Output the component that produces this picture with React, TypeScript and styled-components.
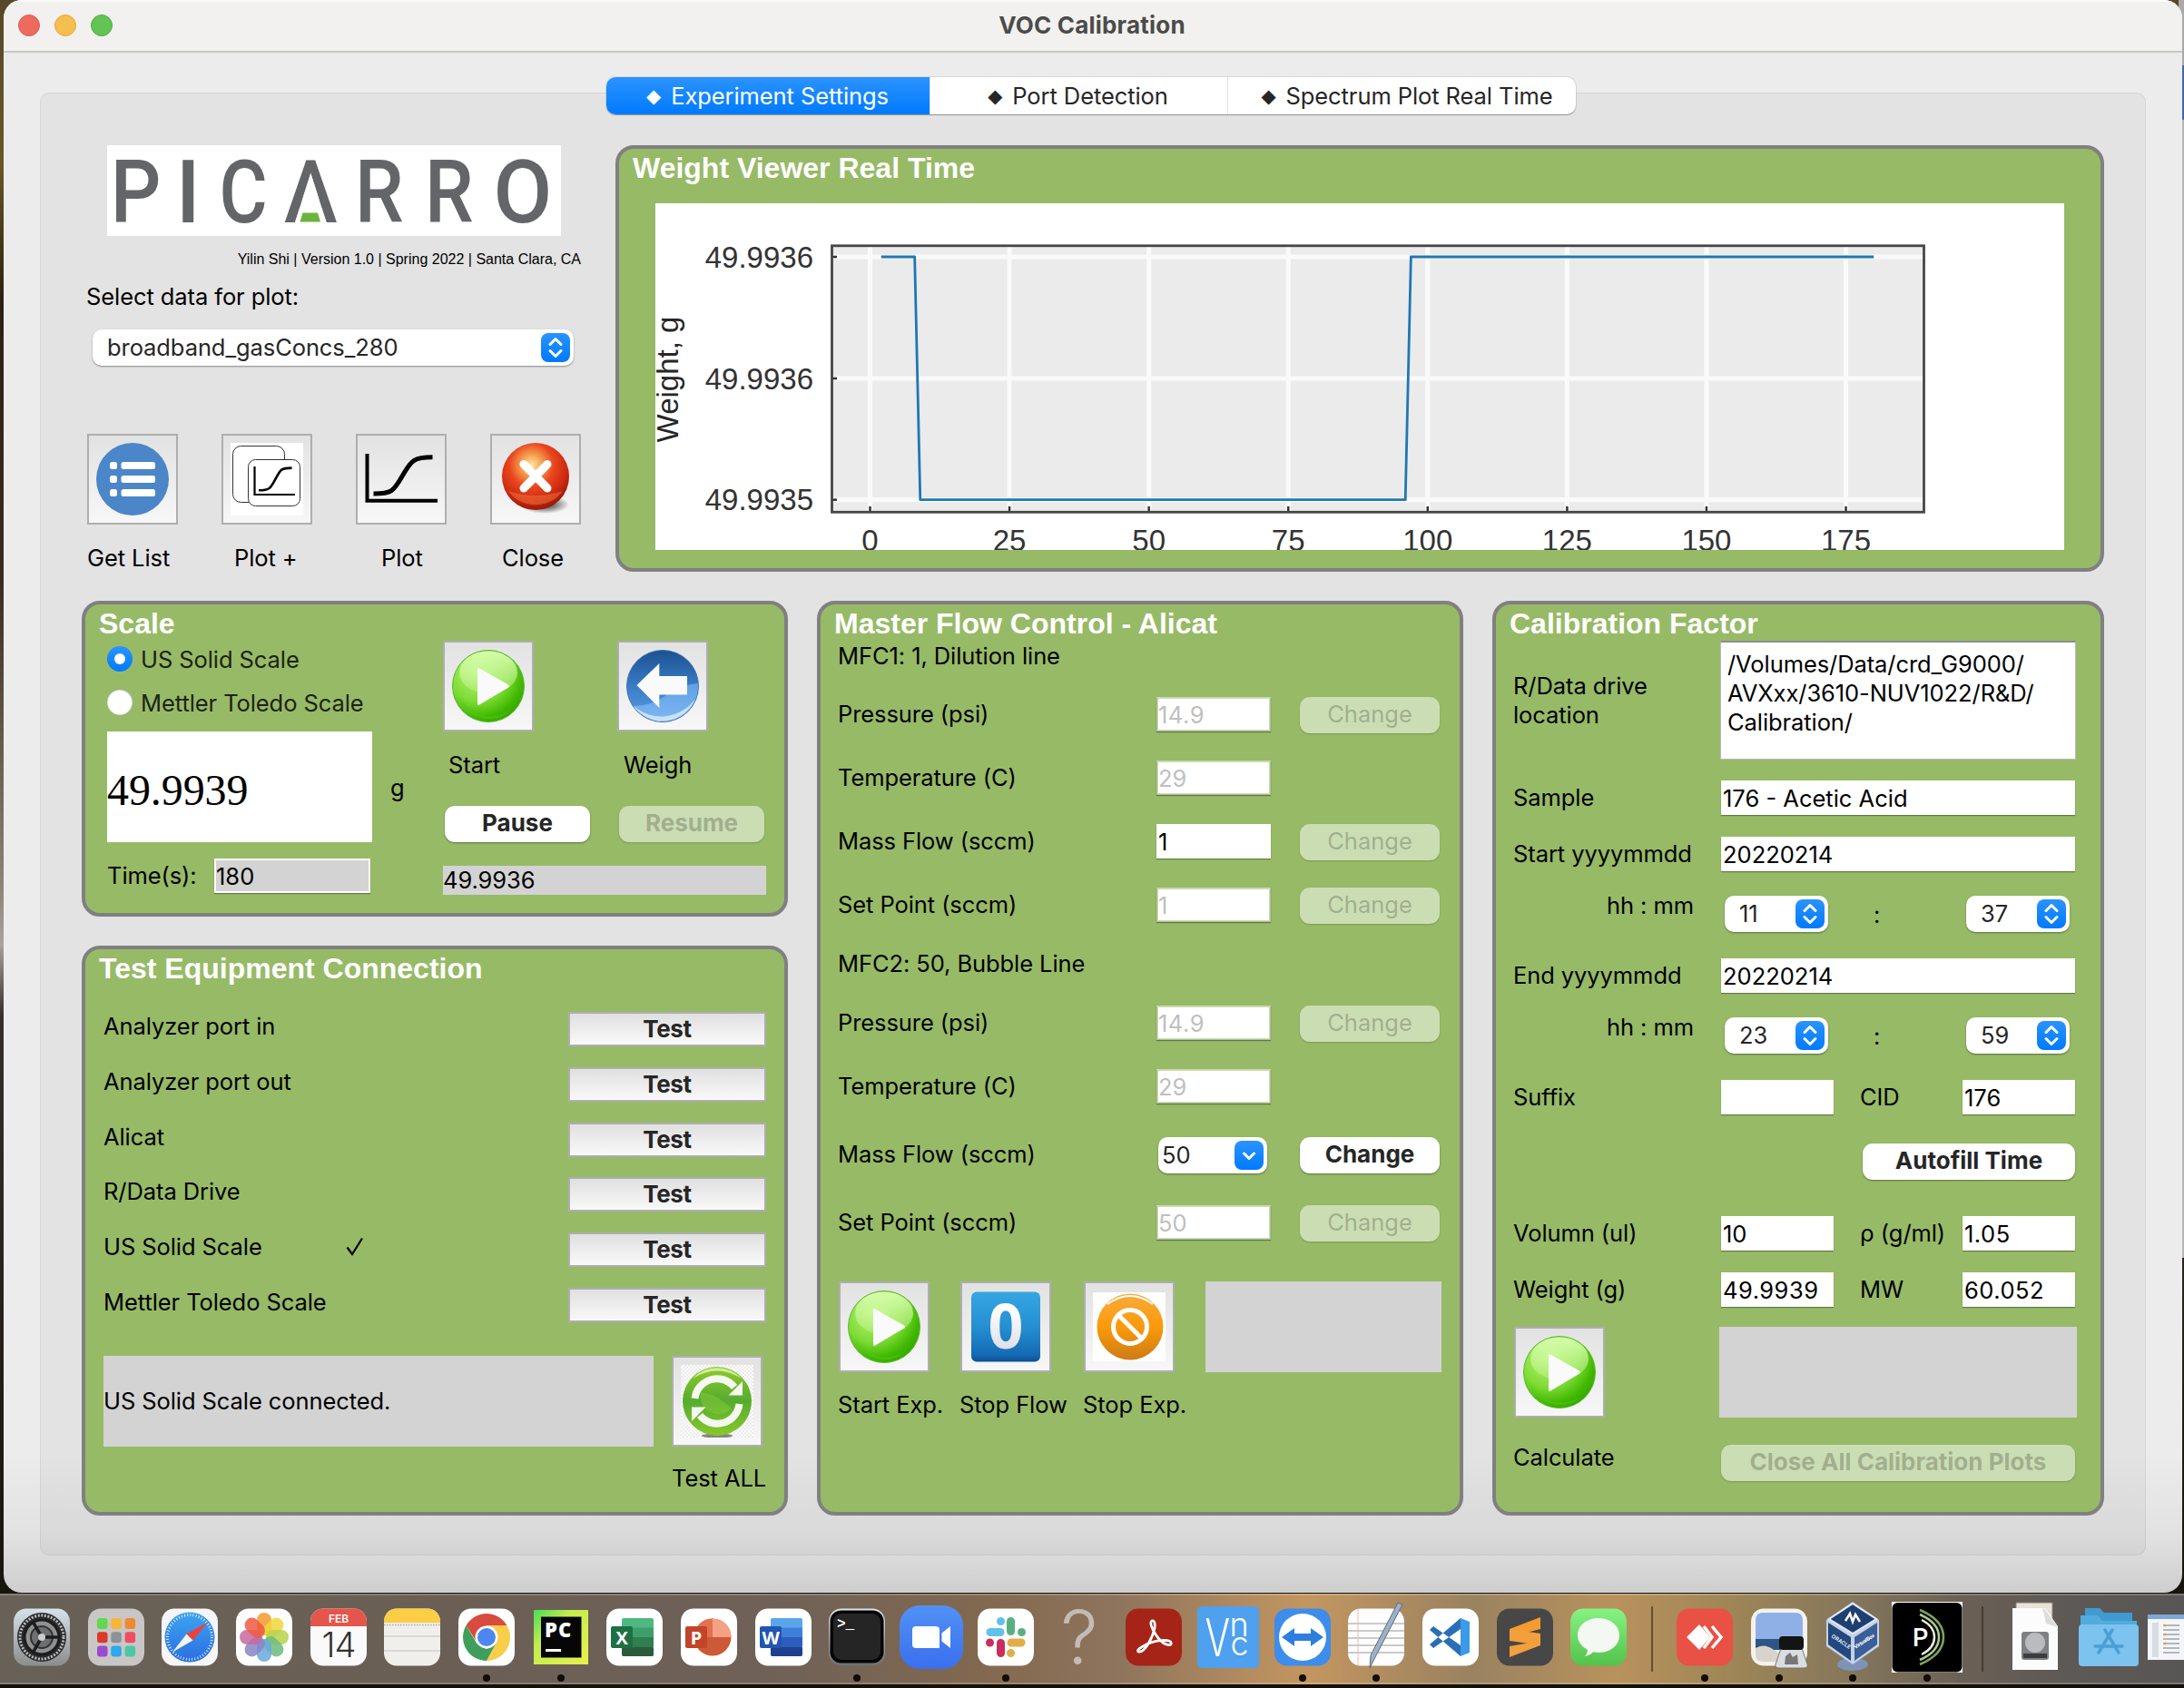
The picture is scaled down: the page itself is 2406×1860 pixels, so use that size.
import React from 'react';
import styled, { createGlobalStyle, css } from 'styled-components';

const GlobalStyle = createGlobalStyle`
  html, body { margin: 0; padding: 0; }
  *, *::before, *::after { box-sizing: border-box; }
  body {
    width: 2406px;
    height: 1860px;
    overflow: hidden;
    font-family: Inter, "Noto Sans", sans-serif;
    font-size: 25.5px;
    letter-spacing: -0.08px;
    color: #000;
  }
`;

const GREEN = '#97ba67';

/* ---------- desktop and window ---------- */

const Desktop = styled.div`
  width: 2406px;
  height: 1860px;
  overflow: hidden;
  display: flex;
  flex-direction: column;
  background:
    linear-gradient(90deg, transparent 2400px, #a9a9a9 2400px) 0 0 / 100% 72px no-repeat,
    linear-gradient(90deg, transparent 2400px, #3f6aa8 2400px) 0 72px / 100% 60px no-repeat,
    linear-gradient(90deg, transparent 2400px, #b4b4b4 2400px) 0 132px / 100% 1254px no-repeat,
    linear-gradient(180deg, #57482a 0, #6b5626 180px, #2c2110 330px, #3a2c1c 640px, #8c8578 980px, #a8a49b 1040px, #33302a 1120px, #1a170f 1700px, #14110b 100%);
`;

const Window = styled.main`
  width: 2400px;
  height: 1755px;
  flex: none;
  margin-left: 4px;
  border-radius: 20px;
  overflow: hidden;
  display: flex;
  flex-direction: column;
  background: linear-gradient(180deg, #ececec 0, #ececec 1600px, #e2e2e2 1690px, #cecece 1755px);
`;

const TitleBar = styled.header`
  height: 58px;
  flex: none;
  display: grid;
  grid-template-columns: 200px 1fr 200px;
  align-items: center;
  padding-bottom: 2px;
  background: #f2f1ef;
  border-top: 2px solid #fbfbfa;
  border-bottom: 2px solid #c8c7c6;
`;

const TrafficLights = styled.div`
  display: flex;
  gap: 16px;
  padding-left: 16px;
`;

const Light = styled.span<{ $color: string; $edge: string }>`
  width: 24px;
  height: 24px;
  border-radius: 50%;
  background: ${(p) => p.$color};
  border: 1px solid ${(p) => p.$edge};
`;

const WindowTitle = styled.h1`
  margin: 0 2px 0 0;
  text-align: center;
  font-size: 26px;
  line-height: 32px;
  font-weight: 700;
  letter-spacing: 0.2px;
  color: #4b4b4a;
`;

const Pane = styled.section`
  margin: 44px 0 0 40px;
  width: 2320px;
  height: 1612px;
  flex: none;
  display: flex;
  flex-direction: column;
  padding: 0 45px;
  border: 1px solid rgba(0, 0, 0, 0.06);
  border-radius: 10px;
  background: rgba(0, 0, 0, 0.034);
`;

/* ---------- tabs ---------- */

const Tabs = styled.nav`
  display: flex;
  align-self: center;
  margin: -18px 4px 34px 0;
  width: 1068px;
  height: 41px;
  flex: none;
  border-radius: 10px;
  background: #fff;
  box-shadow: 0 0 0 1px rgba(0, 0, 0, 0.08), 0 1px 1px rgba(0, 0, 0, 0.3);
`;

const Tab = styled.button<{ $active?: boolean; $width: number; $shift?: number }>`
  width: ${(p) => p.$width}px;
  height: 41px;
  padding: 0 2px 0 ${(p) => p.$shift ?? 0}px;
  border: 0;
  border-left: 1px solid ${(p) => (p.$active ? 'transparent' : '#e0e0e0')};
  display: flex;
  align-items: center;
  justify-content: center;
  gap: 11px;
  font: inherit;
  line-height: 32px;
  letter-spacing: inherit;
  color: ${(p) => (p.$active ? '#fff' : '#262626')};
  background: ${(p) => (p.$active ? 'linear-gradient(180deg, #2b93ff, #007aff)' : 'transparent')};
  border-radius: ${(p) => (p.$active ? '10px 0 0 10px' : '0')};
`;

const Diamond = styled.span`
  font-family: "DejaVu Sans", sans-serif;
  font-size: 21px;
  line-height: 32px;
`;

/* ---------- grid of the pane ---------- */

const TopRow = styled.div`
  display: flex;
  height: 470px;
  flex: none;
  margin-bottom: 32px;
`;

const Tools = styled.aside`
  width: 588px;
  flex: none;
  display: flex;
  flex-direction: column;
`;

const BottomRow = styled.div`
  display: flex;
  gap: 32px;
  height: 1008px;
  flex: none;
`;

const StackColumn = styled.div`
  width: 778px;
  display: flex;
  flex-direction: column;
  gap: 32px;
`;

const Panel = styled.section<{ $width?: number; $height: number }>`
  width: ${(p) => (p.$width ? `${p.$width}px` : 'auto')};
  height: ${(p) => p.$height}px;
  flex: none;
  display: flex;
  flex-direction: column;
  border: 4px solid #808080;
  border-radius: 20px;
  background: ${GREEN};
`;

const PanelTitle = styled.h2`
  margin: 6px 0 0 15px;
  height: 30px;
  flex: none;
  font: 700 32px/30px "Liberation Sans", Arial, sans-serif;
  letter-spacing: 0;
  color: #fff;
  white-space: nowrap;
`;

/* ---------- shared controls ---------- */

const Label = styled.span<{ $top?: number; $left?: number }>`
  display: block;
  margin-top: ${(p) => p.$top ?? 0}px;
  margin-left: ${(p) => p.$left ?? 0}px;
  line-height: 32px;
  white-space: nowrap;
`;

const field = css`
  display: block;
  height: 38px;
  margin: 0;
  padding: 0;
  border-radius: 0;
  outline: 0;
  font: inherit;
  color: #000;
  line-height: 32px;
`;

const Field = styled.input<{ $width: number; $tone?: 'gray' | 'off'; $wide?: boolean }>`
  ${field}
  width: ${(p) => p.$width}px;
  letter-spacing: ${(p) => (p.$wide ? 0.5 : 0)}px;
  border: 2px solid ${(p) => (p.$tone === 'off' ? 'rgba(255,255,255,.5)' : '#fff')};
  background: ${(p) => (p.$tone === 'gray' ? '#d3d3d3' : '#fff')};
  background-clip: padding-box;
  color: ${(p) => (p.$tone === 'off' ? '#bfbfbf' : '#000')};
  box-shadow: 0 1px 1px rgba(0, 0, 0, 0.35);
`;

const PushButton = styled.button<{ $width: number; $off?: boolean; $light?: boolean }>`
  width: ${(p) => p.$width}px;
  height: 40px;
  padding: 0 0 2px;
  border: 0;
  border-radius: 11px;
  font: inherit;
  font-size: ${(p) => (p.$light ? 25.5 : 26)}px;
  font-weight: ${(p) => (p.$light ? 400 : 700)};
  line-height: 32px;
  color: ${(p) => (p.$off ? 'rgba(38,38,38,.27)' : '#262626')};
  background: ${(p) => (p.$off ? 'rgba(255,255,255,.5)' : '#fff')};
  box-shadow: 0 1px 2px rgba(0, 0, 0, ${(p) => (p.$off ? 0.18 : 0.38)});
`;

const IconFrame = styled.button`
  width: 100px;
  height: 100px;
  flex: none;
  padding: 0;
  border: 2px solid #aeaeae;
  background: linear-gradient(180deg, #e2e2e2, #f7f7f7);
  display: flex;
  align-items: center;
  justify-content: center;
  svg { display: block; }
`;

const IconItem = styled.div<{ $left?: number }>`
  width: 100px;
  flex: none;
  margin-left: ${(p) => p.$left ?? 0}px;
`;

const Readout = styled.output<{ $width: number; $height: number; $left?: number }>`
  width: ${(p) => p.$width}px;
  height: ${(p) => p.$height}px;
  margin-left: ${(p) => p.$left ?? 0}px;
  flex: none;
  display: flex;
  align-items: center;
  background: #d3d3d3;
  line-height: 32px;
`;

const SelectBox = styled.div<{ $width: number; $pad: number }>`
  width: ${(p) => p.$width}px;
  height: 40px;
  flex: none;
  display: flex;
  align-items: center;
  justify-content: space-between;
  padding: 0 4px 0 ${(p) => p.$pad}px;
  border-radius: 10px;
  background: #fff;
  line-height: 32px;
  color: #262626;
  box-shadow: 0 1px 2px rgba(0, 0, 0, 0.4);
`;

const Stepper = styled.span`
  width: 32px;
  height: 32px;
  border-radius: 8px;
  background: linear-gradient(180deg, #2b93ff, #007aff);
  svg { display: block; }
`;

const Select = ({ value, width, pad = 16 }: { value: string; width: number; pad?: number }) => (
  <SelectBox $width={width} $pad={pad}>
    <span>{value}</span>
    <Stepper>
      <svg width="32" height="32" fill="none" stroke="#fff" strokeWidth="3" strokeLinecap="round" strokeLinejoin="round">
        <path d="M10 12.500 16 6.500l6 6M10 19.500l6 6 6-6" />
      </svg>
    </Stepper>
  </SelectBox>
);

const Combo = ({ value, width }: { value: string; width: number }) => (
  <SelectBox $width={width} $pad={4}>
    <span>{value}</span>
    <Stepper>
      <svg width="32" height="32" fill="none" stroke="#fff" strokeWidth="3" strokeLinecap="round" strokeLinejoin="round">
        <path d="M10.500 14 16 19.500l5.500-5.500" />
      </svg>
    </Stepper>
  </SelectBox>
);

/* ---------- button pictures ---------- */

const PlayIcon = ({ id }: { id: string }) => (
  <svg width="80" height="80" viewBox="-40 -40 80 80">
    <defs>
      <radialGradient id={`${id}b`} cx="0.35" cy="0.3" r="0.75">
        <stop offset="0" stopColor="#b9f57a" />
        <stop offset="0.55" stopColor="#7edb35" />
        <stop offset="0.85" stopColor="#3fb800" />
        <stop offset="1" stopColor="#37a800" />
      </radialGradient>
      <linearGradient id={`${id}g`} x1="0" y1="0" x2="0" y2="1">
        <stop offset="0" stopColor="#d9ffb0" stopOpacity="0.95" />
        <stop offset="1" stopColor="#c9f59a" stopOpacity="0.35" />
      </linearGradient>
    </defs>
    <circle r="39.500" fill={`url(#${id}b)`} stroke="#5cb82e" />
    <path d="M-31 14A34 34 0 0 0 24 27 38 38 0 0 1-31 14Z" fill="#52c812" opacity="0.6" />
    <ellipse cx="0" cy="-15" rx="32" ry="23.500" fill={`url(#${id}g)`} />
    <path d="M-12-18.500Q-12-21-9.800-19.600L22-1.600Q24 0 22 1.600L-9.800 20.600Q-12 22-12 19.500Z" fill="#fafafa" />
  </svg>
);

const ListIcon = () => (
  <svg width="80" height="80" viewBox="0 0 80 80">
    <circle cx="40" cy="40" r="40" fill="#4a86c8" />
    {[21, 36, 51].map((y) => (
      <g key={y} fill="#fff">
        <rect x="15" y={y} width="8" height="8" rx="2.500" />
        <rect x="27.500" y={y} width="37.500" height="8" rx="2.500" />
      </g>
    ))}
  </svg>
);

const PlotPlusIcon = () => (
  <svg width="80" height="80" viewBox="254 490 80 80">
    <rect x="254" y="490" width="80" height="80" fill="#fff" />
    <g fill="#fff" stroke="#333" strokeWidth="1">
      <rect x="256.500" y="493.500" width="57" height="62" rx="9" />
      <rect x="273.500" y="508.500" width="57" height="51" rx="8" />
    </g>
    <path d="M280.500 516v31H325" fill="none" stroke="#000" strokeWidth="2.200" />
    <path d="M285 542.300c12 0 13-2 18.500-12.500 5.500-10.500 6-12.200 18-12.200" fill="none" stroke="#000" strokeWidth="2.600" />
  </svg>
);

const PlotIcon = () => (
  <svg width="80" height="80" viewBox="402 488 80 80">
    <path d="M404.500 500v51.800H482" fill="none" stroke="#000" strokeWidth="4" />
    <path d="M411.500 544c20 0 22-2.500 32-20s13-20.300 33-20.300" fill="none" stroke="#000" strokeWidth="5" />
  </svg>
);

const CloseIcon = () => (
  <svg width="80" height="80" viewBox="550 488 80 80">
    <defs>
      <radialGradient id="closeBall" cx="0.44" cy="0.33" r="0.66">
        <stop offset="0" stopColor="#ffe9a8" />
        <stop offset="0.22" stopColor="#f6a552" />
        <stop offset="0.5" stopColor="#ea461d" />
        <stop offset="0.8" stopColor="#cc2a10" />
        <stop offset="1" stopColor="#9c1a0b" />
      </radialGradient>
      <radialGradient id="closeShadow">
        <stop offset="0" stopColor="#000" stopOpacity="0.85" />
        <stop offset="1" stopColor="#000" stopOpacity="0" />
      </radialGradient>
    </defs>
    <ellipse cx="600" cy="556" rx="27" ry="10" fill="url(#closeShadow)" />
    <circle cx="590" cy="525" r="37" fill="url(#closeBall)" />
    <path d="M560 541a37 37 0 0 0 60 0q-30 10-60 0Z" fill="#f4703a" opacity="0.55" />
    <path d="M577 511.500l26 26.500M603 511.500l-26 26.500" stroke="#fff" strokeWidth="9" strokeLinecap="round" />
  </svg>
);

const BackIcon = () => (
  <svg width="80" height="80" viewBox="-40 -40 80 80">
    <defs>
      <linearGradient id="backBall" x1="0" y1="0" x2="0" y2="1">
        <stop offset="0" stopColor="#1b5191" />
        <stop offset="0.5" stopColor="#3a7cc6" />
        <stop offset="1" stopColor="#5b9fe4" />
      </linearGradient>
      <linearGradient id="backGlow" x1="0" y1="0" x2="0" y2="1">
        <stop offset="0" stopColor="#5e9fe6" />
        <stop offset="1" stopColor="#7fb8f3" />
      </linearGradient>
    </defs>
    <circle r="39.500" fill="url(#backBall)" stroke="#3f74b0" />
    <path d="M-32 22Q-12 22 4 10T39-3A39 39 0 0 1-32 22Z" fill="url(#backGlow)" />
    <path d="M-32.500 21.500A46 46 0 0 0 36 14 39 39 0 0 1-32.500 21.500Z" fill="#c9e1fa" />
    <path d="M-28.500-1-3.700-25v14H27V9.500H-3.700V24Z" fill="#fafafa" />
  </svg>
);

const RefreshIcon = () => (
  <svg width="80" height="80" viewBox="-40 -40 80 80">
    <defs>
      <linearGradient id="refreshBall" x1="0" y1="0" x2="0" y2="1">
        <stop offset="0" stopColor="#8ecb2c" />
        <stop offset="0.5" stopColor="#56ab2f" />
        <stop offset="1" stopColor="#86c92b" />
      </linearGradient>
      <pattern id="checker" width="4" height="4" patternUnits="userSpaceOnUse">
        <rect width="4" height="4" fill="#fdfdfd" />
        <path d="M0 0h2v2H0zM2 2h2v2H2z" fill="#ececec" />
      </pattern>
    </defs>
    <rect x="-40" y="-40" width="80" height="80" fill="url(#checker)" />
    <ellipse cy="38" rx="17" ry="2.500" fill="#555" opacity="0.7" />
    <circle r="38" fill="url(#refreshBall)" />
    <path d="M-27-25A37 37 0 0 1 27-25Q0-42-27-25Z" fill="#d3ec9f" />
    <path d="M-18-10Q0-8 16 8A20 20 0 0 1-18-10Z" fill="#8fcf3a" opacity="0.4" />
    <g fill="none" stroke="#f4f8ee" strokeWidth="8">
      <path d="M-24.500-3A24.500 24.500 0 0 1 19-15.500" />
      <path d="M24.500 3A24.500 24.500 0 0 1-19 15.500" />
    </g>
    <path d="M28-22V-6.500H12.500ZM-28 22V6.500H-12.500Z" fill="#f4f8ee" />
  </svg>
);

const ZeroIcon = () => (
  <svg width="80" height="80" viewBox="-40 -40 80 80" overflow="visible">
    <defs>
      <linearGradient id="zeroTile" x1="0" y1="0" x2="0" y2="1">
        <stop offset="0" stopColor="#36a6e2" />
        <stop offset="0.5" stopColor="#258fd2" />
        <stop offset="0.9" stopColor="#146ab4" />
        <stop offset="1" stopColor="#0b4e90" />
      </linearGradient>
      <linearGradient id="zeroDigit" x1="0" y1="0" x2="0" y2="1">
        <stop offset="0.300" stopColor="#fff" />
        <stop offset="0.850" stopColor="#d9dbe8" />
      </linearGradient>
    </defs>
    <rect x="-38" y="-38.500" width="76" height="77" rx="6" fill="url(#zeroTile)" />
    <text y="24.300" textAnchor="middle" fontFamily="Open Sans, sans-serif" fontWeight="700" fontSize="68" letterSpacing="0" fill="url(#zeroDigit)">0</text>
  </svg>
);

const ProhibitIcon = () => (
  <svg width="80" height="80" viewBox="-40 -40 80 80">
    <defs>
      <linearGradient id="prohibitBall" x1="0" y1="0" x2="0" y2="1">
        <stop offset="0" stopColor="#f8ab3c" />
        <stop offset="0.5" stopColor="#fb9a0a" />
        <stop offset="1" stopColor="#cd7b16" />
      </linearGradient>
    </defs>
    <rect x="-40" y="-38" width="80" height="76" fill="#fff" />
    <circle cx="1" r="36.500" fill="url(#prohibitBall)" />
    <path d="M-24-25Q1-43 26-25" fill="none" stroke="#fff" strokeWidth="2" />
    <g fill="none" stroke="#fff" strokeWidth="5">
      <circle cx="1" r="18.500" />
      <path d="M-12-13 14 13" />
    </g>
  </svg>
);

/* ---------- left tools ---------- */

const LogoBox = styled.div`
  margin-left: 28px;
  width: 500px;
  height: 100px;
  flex: none;
  background: #fff;
  svg { display: block; overflow: visible; }
`;

const LOGO_LETTERS: [string, number, number][] = [
  ['P', 3.8, 0.9], ['I', 75.5, 1], ['C', 123.4, 0.84], ['A', 195, 0.91], ['R', 273, 0.88], ['R', 350, 0.88], ['O', 425.6, 0.97],
];

const Logo = () => (
  <LogoBox>
    <svg width="500" height="100" fill="#646568" fontFamily="Roboto, sans-serif" fontWeight="500" fontSize="97">
      {LOGO_LETTERS.map(([ch, x, sx]) => (
        <text key={x} transform={`translate(${x} 84.500) scale(${sx} 1)`}>{ch}</text>
      ))}
      <path d="M224.300 31 242 86h-35.400Z" fill="#fff" />
      <path d="M215.500 74.500h16.500l3 10h-22.500Z" fill="#6cb33f" />
    </svg>
  </LogoBox>
);

const Credit = styled.p`
  margin: 16px 38px 0 0;
  font: 16px/20px "Liberation Sans", Arial, sans-serif;
  letter-spacing: 0;
  text-align: right;
`;

const SelectRow = styled.div`
  margin: 20px 0 75px 12px;
`;

const ToolButtons = styled.div`
  display: flex;
  gap: 48px;
  margin-left: 6px;
`;

/* ---------- chart ---------- */

const ChartArea = styled.div`
  margin: 24px 0 0 40px;
  width: 1552px;
  height: 382px;
  overflow: hidden;
  background: #fff;
  svg { display: block; }
`;

const X_TICKS = [0, 25, 50, 75, 100, 125, 150, 175];
const Y_TICKS: [string, number][] = [['49.9936', 283], ['49.9936', 417], ['49.9935', 550.7]];
const xAt = (t: number) => 958.5 + t * 6.143;
const SERIES: [number, number][] = [[2, 283], [8, 283], [9, 550.7], [96, 550.7], [97, 283], [180, 283]];

const Chart = () => (
  <ChartArea>
    <svg width="1552" height="382" viewBox="722 224 1552 382" fontFamily="Liberation Sans, Arial, sans-serif" fontSize="33" letterSpacing="0" fill="#333">
      <rect x="917" y="271" width="1203" height="293.500" fill="#ebebeb" />
      <g stroke="#fafafa" strokeWidth="5">
        {X_TICKS.map((t) => <path key={t} d={`M${xAt(t)} 271V564`} />)}
        {Y_TICKS.map(([, y]) => <path key={y} d={`M917 ${y}H2120`} />)}
      </g>
      <g stroke="#333" strokeWidth="2.500">
        {X_TICKS.map((t) => <path key={t} d={`M${xAt(t)} 558V564`} />)}
        {Y_TICKS.map(([, y]) => <path key={y} d={`M917 ${y}h5`} />)}
      </g>
      <polyline points={SERIES.map(([t, y]) => `${xAt(t)},${y}`).join(' ')} fill="none" stroke="#1f77b4" strokeWidth="2.800" strokeLinejoin="round" />
      <rect x="916.500" y="270.800" width="1203" height="293.500" fill="none" stroke="#464646" strokeWidth="2.800" />
      {Y_TICKS.map(([s, y]) => <text key={y} x="896" y={y + 11.7} textAnchor="end">{s}</text>)}
      {X_TICKS.map((t) => <text key={t} x={xAt(t)} y="606.500" textAnchor="middle">{t}</text>)}
      <text transform="translate(746.500 418) rotate(-90)" textAnchor="middle" fill="#262626">Weight, g</text>
    </svg>
  </ChartArea>
);

/* ---------- scale panel ---------- */

const ScaleBody = styled.div`
  display: flex;
  padding-left: 24px;
`;

const ScaleLeft = styled.div`
  width: 370px;
  padding-top: 8px;
`;

const RadioRow = styled.label`
  display: flex;
  align-items: center;
  gap: 9px;
  height: 32px;
  margin-bottom: 16px;
  color: #1d2214;
  white-space: nowrap;
`;

const RadioDot = styled.span<{ $on?: boolean }>`
  width: 28px;
  height: 28px;
  border-radius: 50%;
  display: grid;
  place-items: center;
  background: ${(p) => (p.$on ? 'linear-gradient(180deg, #2b93ff, #007aff)' : '#fff')};
  box-shadow: ${(p) => (p.$on ? 'none' : 'inset 0 0 2px rgba(0,0,0,.4)')};
  &::after {
    content: '';
    width: 12px;
    height: 12px;
    border-radius: 50%;
    background: #fff;
  }
`;

const DisplayRow = styled.div`
  display: flex;
  align-items: center;
  gap: 20px;
`;

const WeightDisplay = styled.output`
  width: 292px;
  height: 122px;
  padding-top: 8px;
  display: flex;
  align-items: center;
  background: #fff;
  font: 48px/60px "Liberation Serif", "Times New Roman", serif;
`;

const TimeRow = styled.div`
  display: grid;
  grid-template-columns: 118px 172px;
  align-items: center;
  margin-top: 18px;
`;

const ScaleRight = styled.div`
  padding-top: 4px;
`;

const PairRow = styled.div<{ $top?: number; $left?: number }>`
  display: grid;
  grid-template-columns: 192px 164px;
  margin-top: ${(p) => p.$top ?? 0}px;
  margin-left: ${(p) => p.$left ?? 0}px;
`;

/* ---------- test panel ---------- */

const TestList = styled.div`
  display: grid;
  grid-auto-rows: 38px;
  row-gap: 22.8px;
  margin: 33px 0 0 20px;
`;

const TestRow = styled.div`
  display: grid;
  grid-template-columns: 267px 245px 218px;
  align-items: start;
`;

const TestButton = styled.button`
  height: 38px;
  padding: 0;
  border: 2px solid #aeaeae;
  background: linear-gradient(180deg, #e0e0e0, #f9f9f9);
  font: inherit;
  font-size: 26px;
  font-weight: 700;
  line-height: 32px;
  letter-spacing: -0.3px;
  color: #262626;
`;

const CheckMark = styled.svg`
  display: block;
  margin-top: 4px;
`;

const TestFooter = styled.div`
  display: flex;
  gap: 20px;
  margin: 37px 0 0 20px;
`;

/* ---------- flow panel ---------- */

const FlowBody = styled.div`
  padding-left: 19px;
`;

const FlowRow = styled.div<{ $top: number }>`
  display: grid;
  grid-template-columns: 351px 158px 154px;
  align-items: start;
  height: 40px;
  margin-top: ${(p) => p.$top}px;
`;

const FlowActions = styled.div`
  display: grid;
  grid-template-columns: 134px 136px 134px 260px;
  margin: 44px 0 0 1px;
`;

const ComboSlot = styled.div`
  padding-left: 2px;
`;

type FlowSpec = { name: string; value: string; top: number; kind?: 'edit' | 'combo'; button?: 'off' | 'on' };

const FlowLine = ({ name, value, top, kind, button }: FlowSpec) => (
  <FlowRow $top={top}>
    <Label $top={3}>{name}</Label>
    {kind === 'combo' ? (
      <ComboSlot><Combo value={value} width={120} /></ComboSlot>
    ) : (
      <Field readOnly $width={126} $tone={kind === 'edit' ? undefined : 'off'} $wide={value.includes('.')} value={value} />
    )}
    {button && <PushButton $width={154} $off={button === 'off'} $light={button === 'off'}>Change</PushButton>}
  </FlowRow>
);

const MFC1: FlowSpec[] = [
  { name: 'Pressure (psi)', value: '14.9', top: 29, button: 'off' },
  { name: 'Temperature (C)', value: '29', top: 30 },
  { name: 'Mass Flow (sccm)', value: '1', top: 30, kind: 'edit', button: 'off' },
  { name: 'Set Point (sccm)', value: '1', top: 30, button: 'off' },
];
const MFC2: FlowSpec[] = [
  { name: 'Pressure (psi)', value: '14.9', top: 30, button: 'off' },
  { name: 'Temperature (C)', value: '29', top: 30 },
  { name: 'Mass Flow (sccm)', value: '50', top: 35, kind: 'combo', button: 'on' },
  { name: 'Set Point (sccm)', value: '50', top: 35, button: 'off' },
];

/* ---------- calibration panel ---------- */

const CalBody = styled.div`
  padding-left: 19px;
`;

const CalRow = styled.div<{ $top: number; $height?: number }>`
  display: grid;
  grid-template-columns: 229px 390px;
  align-items: center;
  height: ${(p) => p.$height ?? 38}px;
  margin-top: ${(p) => p.$top}px;
`;

const CalPair = styled.div`
  display: grid;
  grid-template-columns: 153px 113px 124px;
  align-items: center;
`;

const CalTime = styled.div`
  display: grid;
  grid-template-columns: 266px 114px;
  padding-left: 4px;
  align-items: center;
`;

const TimeStart = styled.div`
  display: grid;
  grid-template-columns: 164px auto;
  align-items: center;
  justify-content: start;
`;

const HourLabel = styled.span`
  display: block;
  margin-top: -19px;
  padding-right: 30px;
  text-align: right;
  line-height: 32px;
`;

const PathLabel = styled.span`
  line-height: 32px;
`;

const PathBox = styled.div`
  height: 131px;
  width: 392px;
  margin-left: -1px;
  padding: 8px 0 0 7px;
  border: 1px solid #b9b9b9;
  border-top: 2px solid #8d8d8d;
  background: #fff;
  line-height: 32px;
  white-space: pre;
`;

const RightAligned = styled.div`
  display: flex;
  justify-content: flex-end;
`;

const HourRow = ({ hh, mm }: { hh: string; mm: string }) => (
  <CalRow $top={27} $height={40}>
    <HourLabel>hh : mm</HourLabel>
    <CalTime>
      <TimeStart>
        <Select value={hh} width={114} />
        <Label $top={2}>:</Label>
      </TimeStart>
      <Select value={mm} width={114} />
    </CalTime>
  </CalRow>
);

/* ---------- dock ---------- */

const Dock = styled.footer`
  margin-top: 1px;
  height: 100px;
  flex: none;
  display: flex;
  padding-left: 5px;
  border-top: 2px solid rgba(255, 255, 255, 0.2);
  border-bottom: 2px solid rgba(255, 255, 255, 0.2);
  background: linear-gradient(90deg, #686157 0, #6b5f55 500px, #6f6157 850px, #82694f 1090px, #8e745d 1230px, #c39660 1440px, #9a8260 1620px, #b8925c 1780px, #a08657 1900px, #85775b 2040px, #6b6055 2160px, #5d5956 2280px, #585655 100%);
`;

const DockGroup = styled.div`
  display: flex;
  flex: none;
`;

const DockSlot = styled.div`
  width: 81.7px;
  flex: none;
  display: flex;
  flex-direction: column;
  align-items: center;
  padding-top: 5px;
  svg { display: block; overflow: visible; }
`;

const RunDot = styled.span`
  width: 8px;
  height: 8px;
  border-radius: 50%;
  background: #120d08;
`;

const Divider = styled.span<{ $left: number; $right: number }>`
  width: 2px;
  height: 72px;
  flex: none;
  margin: 12px ${(p) => p.$right}px 0 ${(p) => p.$left}px;
  background: rgba(50, 35, 20, 0.6);
`;

const Tile = ({ fill }: { fill: string }) => <rect x="-31" y="-31.500" width="62" height="63" rx="14" fill={fill} />;

const PETALS = ['#f39a2d', '#efd73a', '#b6d24a', '#6dbb7c', '#6aa9dc', '#8a84c8', '#c5699f', '#ee5a43'];
const LAUNCH = ['#62d84e', '#f7b533', '#f08a30', '#d93a2b', '#8d9299', '#ef4d63', '#9a4bd0', '#2ea8f0', '#4cc7a6'];

const Office = ({ letter, main, shades, round }: { letter: string; main: string; shades: string[]; round?: boolean }) => (
  <>
    <Tile fill="#fff" />
    {round ? (
      <>
        <circle cx="4" r="20.500" fill={shades[2]} />
        <path d="M4 0V-20.500A20.500 20.500 0 0 1 24.500 0Z" fill={shades[1]} />
        <path d="M4 0V-20.500A20.500 20.500 0 0 0-16.500 0Z" fill={shades[0]} />
      </>
    ) : (
      <>
        <rect x="-14" y="-21" width="35" height="42" rx="2" fill={shades[0]} />
        <rect x="-14" y="-10.500" width="35" height="10.500" fill={shades[1]} />
        <rect x="-14" y="0" width="35" height="10.500" fill={shades[2]} />
        <rect x="-14" y="10.500" width="35" height="10.500" rx="2" fill={shades[3]} />
      </>
    )}
    <rect x="-26" y="-12" width="24" height="24" rx="2" fill={main} />
    <text x="-14" y="7.500" textAnchor="middle" fontSize="20" fontWeight="700" fill="#fff" fontFamily="Open Sans, sans-serif">{letter}</text>
  </>
);

const ART: Record<string, React.ReactNode> = {
  settings: (
    <>
      <Tile fill="url(#dkSteel)" />
      <circle r="27" fill="#2b2b2d" />
      <circle r="24" fill="none" stroke="#b9bbbd" strokeWidth="3" strokeDasharray="2 1.600" />
      <circle r="19" fill="#8f9193" stroke="#1d1d1e" strokeWidth="3" />
      <circle r="12" fill="#6d6f71" stroke="#333" strokeWidth="2" />
      <g stroke="#1d1d1e" strokeWidth="3.500"><path d="M0 0H20M0 0-10-17.300M0 0-10 17.300" /></g>
      <circle r="4" fill="#c9cbcd" />
    </>
  ),
  launchpad: (
    <>
      <Tile fill="#c9c7c5" />
      {LAUNCH.map((c, i) => <rect key={c} x={-21 + (i % 3) * 15.3} y={-21 + Math.floor(i / 3) * 15.3} width="11.500" height="12" rx="3" fill={c} />)}
    </>
  ),
  safari: (
    <>
      <Tile fill="#f6f6f8" />
      <circle r="27.500" fill="url(#dkSafari)" />
      <circle r="24.500" fill="none" stroke="#fff" strokeWidth="3" strokeDasharray="0.800 2.400" />
      <path d="M20-16.500-3.500-3.500 3.500 3.500Z" fill="#ef4237" />
      <path d="M-19 16.500-3.500-3.500 3.500 3.500Z" fill="#f3f3f3" />
    </>
  ),
  photos: (
    <>
      <Tile fill="#fdfdfd" />
      {PETALS.map((c, i) => <rect key={c} x="-8" y="-27" width="16" height="25" rx="8" fill={c} fillOpacity="0.85" transform={`rotate(${i * 45})`} />)}
    </>
  ),
  calendar: (
    <>
      <Tile fill="#fafafa" />
      <path d="M-31-12v-5.500a14 14 0 0 1 14-14h34a14 14 0 0 1 14 14V-12Z" fill="#e4564c" />
      <text y="-16.500" textAnchor="middle" fontSize="12" fontWeight="600" fill="#fff">FEB</text>
      <text y="22" textAnchor="middle" fontSize="38" fontWeight="300" fill="#333" letterSpacing="-1">14</text>
    </>
  ),
  notes: (
    <>
      <Tile fill="#f1efec" />
      <path d="M-31-16v-1.500a14 14 0 0 1 14-14h34a14 14 0 0 1 14 14V-16Z" fill="#fbce45" />
      <path d="M-31-13.500h62" stroke="#aaa" strokeWidth="1.500" strokeDasharray="1.500 1.500" />
      <path d="M-31-1h62M-31 15h62" stroke="#d2d0cd" strokeWidth="1.500" />
    </>
  ),
  chrome: (
    <>
      <Tile fill="#fff" />
      <path d="M-22.500-13-10.500 6 0 0V-13H22.500A26 26 0 0 0-22.500-13Z" fill="#d84b3f" />
      <path d="M22.500-13H0L10.500 6 0 26A26 26 0 0 0 22.500-13Z" fill="#f8ce4a" />
      <path d="M-22.500-13-11 6.500 0 13 10.500 6.500 0 26A26 26 0 0 1-22.500-13Z" fill="#3f9f5a" />
      <circle r="12.500" fill="#fff" />
      <circle r="10" fill="#4d86ee" />
    </>
  ),
  pycharm: (
    <>
      <rect x="-30" y="-30" width="60" height="60" fill="url(#dkPy)" />
      <rect x="-22" y="-22.500" width="44.500" height="45" fill="#050605" />
      <text x="-18" y="0" fontSize="22" fontWeight="800" fill="#fff" letterSpacing="1" fontFamily="Open Sans, sans-serif">PC</text>
      <rect x="-17" y="13" width="17" height="3" fill="#fff" />
    </>
  ),
  excel: <Office letter="X" main="#1d7044" shades={['#4fb880', '#3f9f6b', '#2f7f50', '#2a5c3c']} />,
  powerpoint: <Office letter="P" main="#c0452a" shades={['#e5704d', '#f4a184', '#cd5a36']} round />,
  word: <Office letter="W" main="#2155b3" shades={['#5ba6ea', '#3f7fd8', '#2c5dbe', '#1f408e']} />,
  terminal: (
    <>
      <Tile fill="url(#dkTermRim)" />
      <rect x="-29.500" y="-29.500" width="59" height="58" rx="12" fill="#050505" />
      <rect x="-26" y="-26" width="52" height="51" rx="9" fill="#252525" />
      <text x="-22" y="-10" fontSize="16" fontWeight="700" fill="#fff" fontFamily="Liberation Mono, monospace">&gt;_</text>
    </>
  ),
  zoom: (
    <>
      <rect x="-35" y="-35" width="70" height="70" rx="22" fill="url(#dkZoom)" />
      <path d="M-21-8q0-4 4-4H5q4 0 4 4V12H-17q-4 0-4-4ZM11.500-4.500 21-12V12L11.500 4.500Z" fill="#fff" />
    </>
  ),
  slack: (
    <>
      <Tile fill="#fff" />
      <g strokeWidth="9" strokeLinecap="round" fill="none">
        <path d="M-17-5.500H-6" stroke="#5ec2ea" /><path d="M-5.500-17.500v0" stroke="#5ec2ea" />
        <path d="M5.500-17.500v11" stroke="#58b082" /><path d="M17.500-5.500h0" stroke="#58b082" />
        <path d="M6 6H17" stroke="#e0ae48" /><path d="M5.500 17.500v0" stroke="#e0ae48" />
        <path d="M-5.500 6.500v11" stroke="#cb2d5e" /><path d="M-17.500 6h0" stroke="#cb2d5e" />
      </g>
    </>
  ),
  missing: (
    <text y="30" textAnchor="middle" fontSize="82" fontWeight="300" letterSpacing="0" fill="#c4bcb4">?</text>
  ),
  acrobat: (
    <>
      <Tile fill="#a52417" />
      <path d="M-17 16C-10 18-1 0 1-10 2-16 0-19-2-18-6-16 2 0 10 6 16 10 20 9 19 6 18 2 2 3-8 8-14 11-19 14-17 16Z" fill="none" stroke="#fff" strokeWidth="2.800" strokeLinejoin="round" />
    </>
  ),
  vnc: (
    <>
      <rect x="-34" y="-34" width="68" height="68" rx="5" fill="#4fa0ee" />
      <g fill="#fff" fontWeight="300" letterSpacing="0">
        <text transform="translate(-25.500 20.500) scale(.72 1)" fontSize="57">V</text>
        <text transform="translate(1.500 -1.500)" fontSize="36">n</text>
        <text transform="translate(2.500 20)" fontSize="36">c</text>
      </g>
    </>
  ),
  teamviewer: (
    <>
      <Tile fill="#3c8dec" />
      <circle r="26" fill="#fff" />
      <path d="M-23 0-9-10v6H9v-6L23 0 9 10V4H-9v6Z" fill="#2e7ee2" />
    </>
  ),
  textedit: (
    <>
      <Tile fill="#fdfdfd" />
      <path d="M-31-15h62M-31-7h62M-31 1h62M-31 9h62M-31 17h62" stroke="#b9b9b9" strokeWidth="1.300" />
      <path d="M-20-31v62" stroke="#f2b6b6" />
      <path d="M24-38 29-36-1 22-7 34-6 20Z" fill="#9db2c8" stroke="#5d6b7a" />
    </>
  ),
  vscode: (
    <>
      <Tile fill="#fff" />
      <path d="M11-21 21-17V17L11 21Z" fill="#3d9ae8" />
      <path d="M11-21-23 8l4 4L11-9ZM11 21-23-8l4-4L11 9Z" fill="#2a6fb5" />
    </>
  ),
  sublime: (
    <>
      <Tile fill="#474747" />
      <path d="M17-22-17-9V4L17 9V-4L-6-3 17-9Z" fill="#f59b30" />
      <path d="M-17 22 17 9V-4L-17-9V3L6 6-17 10Z" fill="#f2a03d" />
    </>
  ),
  messages: (
    <>
      <Tile fill="url(#dkMsg)" />
      <path d="M0-21C13-21 23-13 23-2S13 17 0 17q-3 0-6-.700Q-9 20-15 21-12 18-12 14-23 8-23-2C-23-13-13-21 0-21Z" fill="#f4f8f2" />
    </>
  ),
  anydesk: (
    <>
      <Tile fill="#e95144" />
      <path d="M-6-14 6 0-6 14-20 0Z" fill="#fff" />
      <path d="M-1-12 8 0-1 12M8-12 18 0 8 12" fill="none" stroke="#fff" strokeWidth="3.500" />
    </>
  ),
  preview: (
    <>
      <Tile fill="#f4f2ee" />
      <path d="M-26-18q0-9 8-9h36q8 0 8 9V2H-26Z" fill="#8fb0e6" />
      <rect x="-26" y="2" width="52" height="12" fill="#2d5585" />
      <path d="M-26 12q10-6 20 2t16 0v13H-18q-8 0-8-8Z" fill="#d9d4cb" />
      <path d="M2 12h23l6 18q1 4-4 4H0q-5 0-4-4Z" fill="#d8dde0" stroke="#777" />
      <rect x="0" y="-1" width="27" height="15" rx="4" fill="#141414" />
      <path d="M7 21l5-4 3 5 5-3 1 11H6Z" fill="#777" />
    </>
  ),
  virtualbox: (
    <>
      <ellipse cy="30" rx="17" ry="7" fill="#7d93b8" />
      <path d="M0-39 29-19V10L0 30-29 10V-19Z" fill="#c4d2e6" />
      <path d="M0-37 26-20 0-4-26-20Z" fill="#1e3f72" stroke="#dfe8f4" strokeWidth="2" />
      <path d="M-27-16-2 0V26L-27 8Z" fill="#24477d" />
      <path d="M27-16 2 0V26L27 8Z" fill="#3a5f98" />
      <path d="M-8-18-3-26l3 9 3-8 5 8" fill="none" stroke="#fff" strokeWidth="2.500" />
      <text transform="translate(-24 0) rotate(33)" fontSize="6" fontWeight="700" letterSpacing="0" fill="#d9e4f3">ORACLE</text>
      <text transform="translate(3 13) rotate(-33)" fontSize="5.500" fontWeight="700" letterSpacing="-0.300" fill="#fff">VirtualBox</text>
    </>
  ),
  picarro: (
    <>
      <rect x="-39" y="-39" width="78" height="78" fill="#fff" />
      <rect x="-38.500" y="-38" width="77" height="76.500" rx="6" fill="#000" />
      <text x="-16" y="10" fontSize="27" fontWeight="500" fill="#fff" fontFamily="Roboto, sans-serif">P</text>
      <g fill="none" strokeWidth="2.500">
        <path d="M-6-19Q8-12 8 0T-6 19" stroke="#e8efe0" />
        <path d="M-8-25Q13-16 13 0T-8 25" stroke="#aecb90" />
        <path d="M-8-30Q18-19 18 0T-8 30" stroke="#7da65a" />
      </g>
    </>
  ),
  documents: (
    <>
      <path d="M-21-38H19V-20H-21Z" fill="#e9e2d8" stroke="#8a8178" />
      <path d="M-25-32H11L25-12V36H-25Z" fill="#fcfcfc" />
      <path d="M8-34 25-11 12-15Z" fill="#dcdcdc" />
      <rect x="-15" y="-6" width="30" height="31" rx="3" fill="#7e8083" />
      <circle cy="6" r="11" fill="#b9bbbe" />
      <rect x="-13" y="18" width="26" height="5" fill="#3c3c3e" />
    </>
  ),
  folder: (
    <>
      <path d="M-26-32H-10l5 5H26V0H-26Z" fill="#3f9bd0" />
      <path d="M-31-24H-12l5 6H31V0H-31Z" fill="#52abdc" />
      <rect x="-33" y="-14" width="66" height="46" rx="4" fill="#7cc3f0" />
      <path d="M-11 17 4-8M11 17-4-8M-15 10H15" stroke="#4b9fd4" strokeWidth="3.500" strokeLinecap="round" />
    </>
  ),
  minimized: (
    <>
      <rect x="-39" y="-25" width="78" height="50" fill="#f3f5f8" />
      <rect x="-39" y="-25" width="78" height="5" fill="#7fa6d8" />
      <rect x="-34" y="-16" width="7" height="38" fill="#d8dde4" />
      <g stroke="#9aa3ad" strokeWidth="1.500"><path d="M-22-13h18M-22-8h18M-22-3h18M-22 2h18M-22 7h18M-22 12h18M-22 17h18" /></g>
      <g fill="#e3a43a"><circle cx="-20" cy="-13" r="1.500" /><circle cx="-20" cy="-3" r="1.500" /><circle cx="-20" cy="7" r="1.500" /></g>
    </>
  ),
};

const Defs = () => (
  <defs>
    <linearGradient id="dkSteel" x1="0" y1="0" x2="0" y2="1"><stop offset="0" stopColor="#d5e2ea" /><stop offset="1" stopColor="#8c8c8c" /></linearGradient>
    <linearGradient id="dkSafari" x1="0" y1="0" x2="0" y2="1"><stop offset="0" stopColor="#3ea4f2" /><stop offset="1" stopColor="#2a6ee0" /></linearGradient>
    <linearGradient id="dkPy" x1="0" y1="0" x2="1" y2="1"><stop offset="0" stopColor="#46dd55" /><stop offset="0.35" stopColor="#c3ec50" /><stop offset="1" stopColor="#e9f14e" /></linearGradient>
    <linearGradient id="dkTermRim" x1="0" y1="0" x2="0" y2="1"><stop offset="0" stopColor="#dbe6ec" /><stop offset="1" stopColor="#6e6e6e" /></linearGradient>
    <linearGradient id="dkZoom" x1="0" y1="0" x2="0" y2="1"><stop offset="0" stopColor="#5191f5" /><stop offset="1" stopColor="#3a6fee" /></linearGradient>
    <linearGradient id="dkMsg" x1="0" y1="0" x2="0" y2="1"><stop offset="0" stopColor="#86f283" /><stop offset="1" stopColor="#53c24b" /></linearGradient>
  </defs>
);

const DockIcon = ({ name, running }: { name: string; running?: boolean }) => (
  <DockSlot>
    <svg width="78" height="82" viewBox="-39 -41 78 82">
      <Defs />
      {ART[name]}
    </svg>
    {running && <RunDot />}
  </DockSlot>
);

const APPS = ['settings', 'launchpad', 'safari', 'photos', 'calendar', 'notes', 'chrome', 'pycharm', 'excel', 'powerpoint', 'word', 'terminal', 'zoom', 'slack', 'missing', 'acrobat', 'vnc', 'teamviewer', 'textedit', 'vscode', 'sublime', 'messages'];
const RECENT = ['anydesk', 'preview', 'virtualbox', 'picarro'];
const SHELF = ['documents', 'folder', 'minimized'];
const RUNNING = new Set(['chrome', 'pycharm', 'terminal', 'slack', 'teamviewer', 'textedit', ...RECENT]);

/* ---------- app ---------- */

const DEVICES = ['Analyzer port in', 'Analyzer port out', 'Alicat', 'R/Data Drive', 'US Solid Scale', 'Mettler Toledo Scale'];

export default function App() {
  return (
    <Desktop>
      <GlobalStyle />
      <Window>
        <TitleBar>
          <TrafficLights>
            <Light $color="#ed6a5f" $edge="#dc5b50" />
            <Light $color="#f5bf4f" $edge="#dfa83b" />
            <Light $color="#61c455" $edge="#4fac43" />
          </TrafficLights>
          <WindowTitle>VOC Calibration</WindowTitle>
        </TitleBar>

        <Pane>
          <Tabs>
            <Tab $active $width={356}><Diamond>◆</Diamond>Experiment Settings</Tab>
            <Tab $width={328}><Diamond>◆</Diamond>Port Detection</Tab>
            <Tab $width={384} $shift={13}><Diamond>◆</Diamond>Spectrum Plot Real Time</Tab>
          </Tabs>

          <TopRow>
            <Tools>
              <Logo />
              <Credit>Yilin Shi | Version 1.0 | Spring 2022 | Santa Clara, CA</Credit>
              <Label $top={15} $left={5}>Select data for plot:</Label>
              <SelectRow><Select value="broadband_gasConcs_280" width={530} pad={16} /></SelectRow>
              <ToolButtons>
                <IconItem><IconFrame><ListIcon /></IconFrame><Label $top={21}>Get List</Label></IconItem>
                <IconItem><IconFrame><PlotPlusIcon /></IconFrame><Label $top={21} $left={14}>Plot +</Label></IconItem>
                <IconItem><IconFrame><PlotIcon /></IconFrame><Label $top={21} $left={28}>Plot</Label></IconItem>
                <IconItem><IconFrame><CloseIcon /></IconFrame><Label $top={21} $left={13}>Close</Label></IconItem>
              </ToolButtons>
            </Tools>
            <Panel $width={1640} $height={470}>
              <PanelTitle>Weight Viewer Real Time</PanelTitle>
              <Chart />
            </Panel>
          </TopRow>

          <BottomRow>
            <StackColumn>
              <Panel $height={348}>
                <PanelTitle>Scale</PanelTitle>
                <ScaleBody>
                  <ScaleLeft>
                    <RadioRow><RadioDot $on />US Solid Scale</RadioRow>
                    <RadioRow><RadioDot />Mettler Toledo Scale</RadioRow>
                    <DisplayRow><WeightDisplay>49.9939</WeightDisplay><Label $top={2}>g</Label></DisplayRow>
                    <TimeRow><Label>Time(s):</Label><Field readOnly $width={172} $tone="gray" value="180" /></TimeRow>
                  </ScaleLeft>
                  <ScaleRight>
                    <PairRow>
                      <IconItem><IconFrame><PlayIcon id="scale" /></IconFrame><Label $top={21} $left={6}>Start</Label></IconItem>
                      <IconItem><IconFrame><BackIcon /></IconFrame><Label $top={21} $left={7}>Weigh</Label></IconItem>
                    </PairRow>
                    <PairRow $top={29} $left={2}>
                      <PushButton $width={160}>Pause</PushButton>
                      <PushButton $width={160} $off>Resume</PushButton>
                    </PairRow>
                    <PairRow $top={26}><Readout $width={356} $height={32}>49.9936</Readout></PairRow>
                  </ScaleRight>
                </ScaleBody>
              </Panel>

              <Panel $height={628}>
                <PanelTitle>Test Equipment Connection</PanelTitle>
                <TestList>
                  {DEVICES.map((name) => (
                    <TestRow key={name}>
                      <Label>{name}</Label>
                      {name === 'US Solid Scale' ? (
                        <CheckMark width="20" height="22" viewBox="0 0 20 22" fill="none" stroke="#000" strokeWidth="2.200"><path d="M1.500 12.500 7 20 18 2.500" /></CheckMark>
                      ) : <span />}
                      <TestButton>Test</TestButton>
                    </TestRow>
                  ))}
                </TestList>
                <TestFooter>
                  <Readout $width={606} $height={100}>US Solid Scale connected.</Readout>
                  <IconItem><IconFrame><RefreshIcon /></IconFrame><Label $top={19}>Test ALL</Label></IconItem>
                </TestFooter>
              </Panel>
            </StackColumn>

            <Panel $width={712} $height={1008}>
              <PanelTitle>Master Flow Control - Alicat</PanelTitle>
              <FlowBody>
                <Label $top={5}>MFC1: 1, Dilution line</Label>
                {MFC1.map((row) => <FlowLine key={row.name} {...row} />)}
                <Label $top={28}>MFC2: 50, Bubble Line</Label>
                {MFC2.map((row) => <FlowLine key={row.name} {...row} />)}
                <FlowActions>
                  <IconItem><IconFrame><PlayIcon id="exp" /></IconFrame><Label $top={20} $left={-1}>Start Exp.</Label></IconItem>
                  <IconItem><IconFrame><ZeroIcon /></IconFrame><Label $top={20} $left={-1}>Stop Flow</Label></IconItem>
                  <IconItem><IconFrame><ProhibitIcon /></IconFrame><Label $top={20} $left={-1}>Stop Exp.</Label></IconItem>
                  <Readout $width={260} $height={100} />
                </FlowActions>
              </FlowBody>
            </Panel>

            <Panel $width={674} $height={1008}>
              <PanelTitle>Calibration Factor</PanelTitle>
              <CalBody>
                <CalRow $top={4} $height={131}>
                  <PathLabel>R/Data drive<br />location</PathLabel>
                  <PathBox>{'/Volumes/Data/crd_G9000/\nAVXxx/3610-NUV1022/R&D/\nCalibration/'}</PathBox>
                </CalRow>
                <CalRow $top={23}><Label>Sample</Label><Field readOnly $width={390} value="176 - Acetic Acid" /></CalRow>
                <CalRow $top={24}><Label>Start yyyymmdd</Label><Field readOnly $width={390} value="20220214" /></CalRow>
                <HourRow hh="11" mm="37" />
                <CalRow $top={29}><Label>End yyyymmdd</Label><Field readOnly $width={390} value="20220214" /></CalRow>
                <HourRow hh="23" mm="59" />
                <CalRow $top={29}>
                  <Label>Suffix</Label>
                  <CalPair><Field readOnly $width={124} value="" /><Label>CID</Label><Field readOnly $width={124} value="176" /></CalPair>
                </CalRow>
                <CalRow $top={32} $height={40}>
                  <span />
                  <RightAligned><PushButton $width={234}>Autofill Time</PushButton></RightAligned>
                </CalRow>
                <CalRow $top={40}>
                  <Label>Volumn (ul)</Label>
                  <CalPair><Field readOnly $width={124} value="10" /><Label>ρ (g/ml)</Label><Field readOnly $width={124} $wide value="1.05" /></CalPair>
                </CalRow>
                <CalRow $top={24}>
                  <Label>Weight (g)</Label>
                  <CalPair><Field readOnly $width={124} $wide value="49.9939" /><Label>MW</Label><Field readOnly $width={124} $wide value="60.052" /></CalPair>
                </CalRow>
                <CalRow $top={22} $height={100}>
                  <IconItem $left={1}><IconFrame><PlayIcon id="calc" /></IconFrame></IconItem>
                  <Readout $width={394} $height={100} $left={-2} />
                </CalRow>
                <CalRow $top={30} $height={40}>
                  <Label $top={-12}>Calculate</Label>
                  <PushButton $width={390} $off>Close All Calibration Plots</PushButton>
                </CalRow>
              </CalBody>
            </Panel>
          </BottomRow>
        </Pane>
      </Window>

      <Dock>
        <DockGroup>{APPS.map((n) => <DockIcon key={n} name={n} running={RUNNING.has(n)} />)}</DockGroup>
        <Divider $left={17} $right={16} />
        <DockGroup>{RECENT.map((n) => <DockIcon key={n} name={n} running />)}</DockGroup>
        <Divider $left={19} $right={16} />
        <DockGroup>{SHELF.map((n) => <DockIcon key={n} name={n} />)}</DockGroup>
      </Dock>
    </Desktop>
  );
}
